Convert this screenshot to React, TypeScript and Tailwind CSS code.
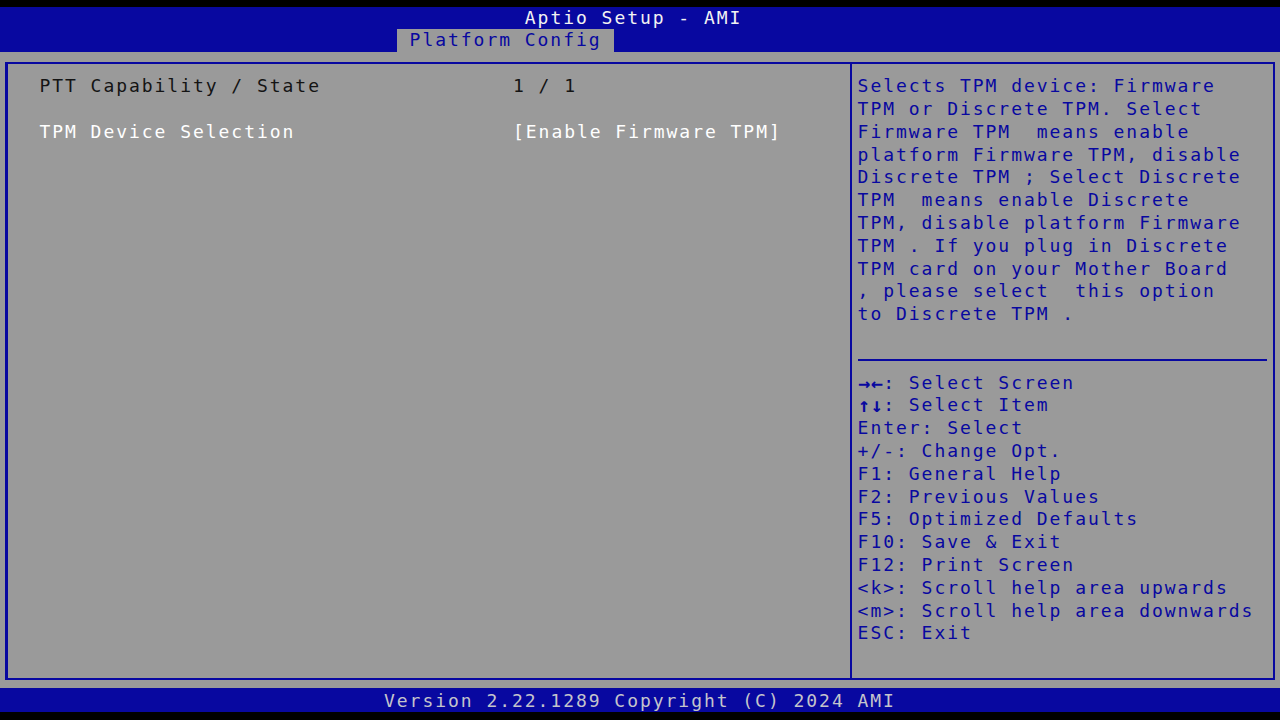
const help = [
  "Selects TPM device: Firmware",
  "TPM or Discrete TPM. Select",
  "Firmware TPM  means enable",
  "platform Firmware TPM, disable",
  "Discrete TPM ; Select Discrete",
  "TPM  means enable Discrete",
  "TPM, disable platform Firmware",
  "TPM . If you plug in Discrete",
  "TPM card on your Mother Board",
  ", please select  this option",
  "to Discrete TPM .",
];

const keys = [
  ["→←", ": Select Screen"],
  ["↑↓", ": Select Item"],
  ["", "Enter: Select"],
  ["", "+/-: Change Opt."],
  ["", "F1: General Help"],
  ["", "F2: Previous Values"],
  ["", "F5: Optimized Defaults"],
  ["", "F10: Save & Exit"],
  ["", "F12: Print Screen"],
  ["", "<k>: Scroll help area upwards"],
  ["", "<m>: Scroll help area downwards"],
  ["", "ESC: Exit"],
];

const Line = ({ children, className = "" }: { children?: React.ReactNode; className?: string }) => (
  <div className={`h-[22.8px] whitespace-pre leading-[22.8px] ${className}`}>{children}</div>
);

export default function App() {
  return (
    <div
      className="flex h-[720px] w-[1280px] flex-col overflow-hidden bg-black pt-[6.6px] text-[18px] tracking-[1.96px]"
      style={{ fontFamily: '"DejaVu Sans Mono", "Liberation Mono", monospace' }}
    >
      {/* header */}
      <div className="bg-[#0808a0]">
        <Line className="pl-[524.8px] text-[#f2f2f2]">Aptio Setup - AMI</Line>
        <div className="flex h-[22.8px] pl-[396.8px]">
          <div className="w-[217.6px] bg-[#9a9a9a] pl-[12.8px] leading-[22.8px] text-[#0808a0]">
            Platform Config
          </div>
        </div>
      </div>

      {/* main */}
      <div className="h-[635.4px] bg-[#9a9a9a] pb-[7.4px] pl-[5px] pr-[5px] pt-[10px]">
        <div className="flex h-[618px] border-2 border-l-[3px] border-[#0808a0]">
          <div className="w-[842px] pl-[31.4px] pt-[11px]">
            <div className="flex text-[#141414]">
              <Line className="w-[473.6px]">PTT Capability / State</Line>
              <Line>1 / 1</Line>
            </div>
            <Line />
            <div className="flex text-white">
              <Line className="w-[473.6px]">TPM Device Selection</Line>
              <Line>[Enable Firmware TPM]</Line>
            </div>
          </div>
          <div className="flex-1 border-l-2 border-[#0808a0] pl-[5.6px] pt-[11px] text-[#0808a0]">
            {help.map((t, i) => (
              <Line key={i}>{t}</Line>
            ))}
            <Line />
            <div className="flex h-[22.8px] items-center pr-[6px]">
              <div className="h-[2px] w-full bg-[#0808a0]" />
            </div>
            {keys.map(([k, t], i) => (
              <Line key={i} className="flex">
                {k &&
                  k.split("").map((a, j) => (
                    <span
                      key={j}
                      className="inline-block w-[12.8px] overflow-hidden text-center text-[20px] font-bold tracking-[0px]"
                    >
                      {a}
                    </span>
                  ))}
                <span>{t}</span>
              </Line>
            ))}
          </div>
        </div>
      </div>

      {/* footer */}
      <div className="bg-[#0808a0] pt-[2px]">
        <Line className="h-[20.8px] pl-[384px] text-[#c4c4cc]">Version 2.22.1289 Copyright (C) 2024 AMI</Line>
      </div>
    </div>
  );
}
